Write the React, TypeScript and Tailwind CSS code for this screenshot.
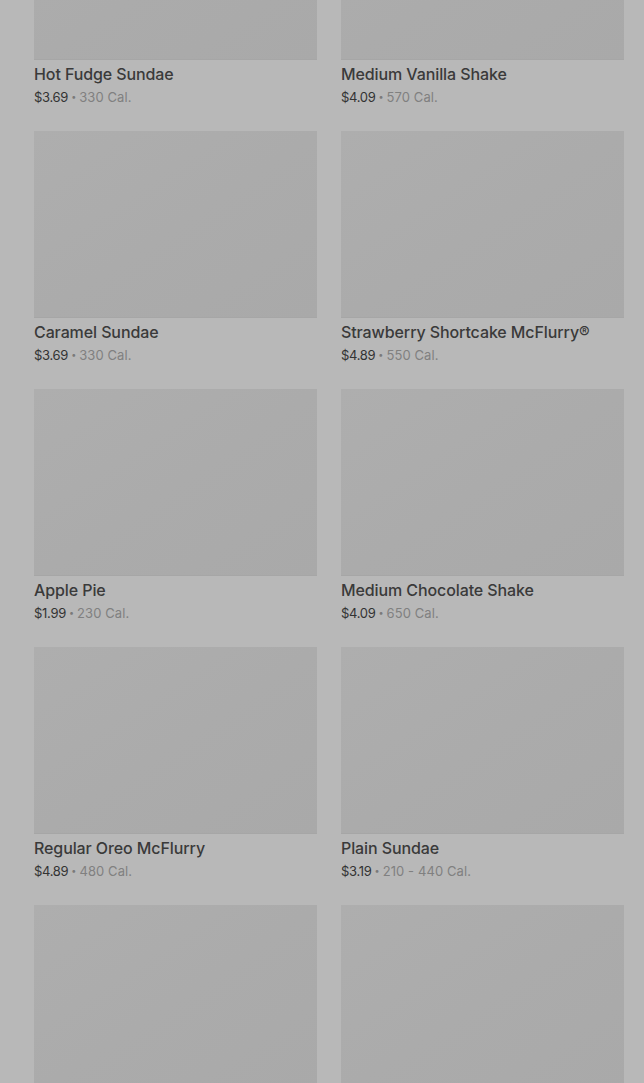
import React from "react";

const items = [
  { name: "Hot Fudge Sundae", price: "$3.69", cal: "330 Cal." },
  { name: "Medium Vanilla Shake", price: "$4.09", cal: "570 Cal." },
  { name: "Caramel Sundae", price: "$3.69", cal: "330 Cal." },
  { name: "Strawberry Shortcake McFlurry®", price: "$4.89", cal: "550 Cal." },
  { name: "Apple Pie", price: "$1.99", cal: "230 Cal." },
  { name: "Medium Chocolate Shake", price: "$4.09", cal: "650 Cal." },
  { name: "Regular Oreo McFlurry", price: "$4.89", cal: "480 Cal." },
  { name: "Plain Sundae", price: "$3.19", cal: "210 - 440 Cal." },
  { name: "", price: "", cal: "" },
  { name: "", price: "", cal: "" },
];

export default function App() {
  return (
    <div
      className="w-[644px] h-[1083px] overflow-hidden bg-[#b8b8b8]"
      style={{ fontFamily: "Inter, 'Noto Sans', sans-serif" }}
    >
      <div className="grid grid-cols-2 gap-x-6 gap-y-[25px] pl-[34px] pr-[20px] -mt-[127px]">
        {items.map((it, i) => (
          <div key={i} className="flex flex-col">
            <div className="h-[187px] bg-gradient-to-br from-[#aeaeae] via-[#ababab] to-[#a9a9a9] border-b border-[#a6a6a6]" />
            <div className="mt-[4px] text-[16px] leading-[20px] font-medium text-[#3a3a3a] tracking-[-0.1px]">
              {it.name}
            </div>
            <div className="flex items-center text-[13px] leading-[18px] mt-[4px] text-[#333333]">
              {it.price && (
                <>
                  <span className="tracking-[-0.3px]">{it.price}</span>
                  <span className="mx-[3px] text-[9px] text-[#7a7a7a]">•</span>
                  <span className="text-[#808080] tracking-[0.1px]">{it.cal}</span>
                </>
              )}
            </div>
          </div>
        ))}
      </div>
    </div>
  );
}
